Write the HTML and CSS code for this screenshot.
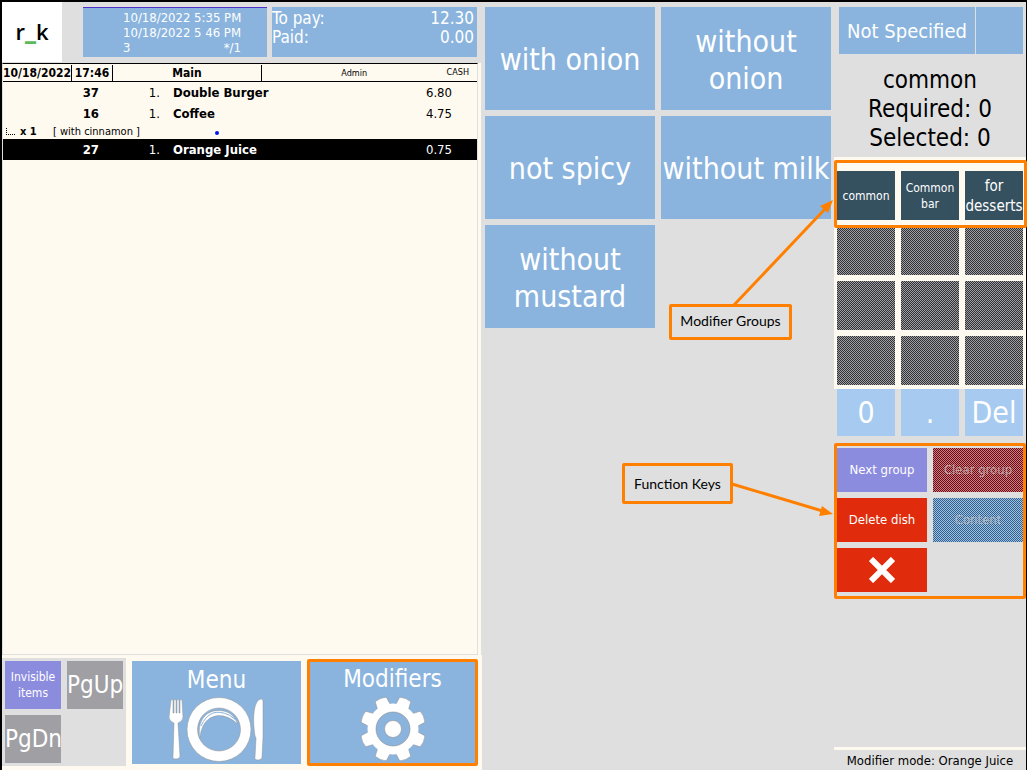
FILE: index.html
```html
<!DOCTYPE html>
<html lang="en">
<head>
	<meta charset="UTF-8">
	<title>Modifiers</title>
	<link rel="stylesheet" href="styles.css">
</head>
<body>
	<div class="station">
		<section class="order">
			<header class="head">
				<div class="logo">r<span>_</span>k</div>
				<div class="info">
					<p>10/18/2022 5:35 PM</p>
					<p>10/18/2022 5 46 PM</p>
					<p class="guests"><span>3</span><span>*/1</span></p>
				</div>
				<div class="total">
					<p><span>To pay:</span><span>12.30</span></p>
					<p><span>Paid:</span><span>0.00</span></p>
				</div>
			</header>
			<div class="bill">
				<div class="bill-head">
					<b class="date">10/18/2022</b>
					<b class="time">17:46</b>
					<b class="hall">Main</b>
					<span class="user">Admin</span>
					<span class="cash">CASH</span>
				</div>
				<table class="items">
					<tr>
						<td class="code">37</td>
						<td class="qty">1.</td>
						<td class="dish">Double Burger</td>
						<td class="price">6.80</td>
					</tr>
					<tr>
						<td class="code">16</td>
						<td class="qty">1.</td>
						<td class="dish">Coffee</td>
						<td class="price">4.75</td>
					</tr>
					<tr class="sub">
						<td colspan="4"><div class="mod"><i class="branch"></i><b>x 1</b><span>[ with cinnamon ]</span><i class="dot"></i></div></td>
					</tr>
					<tr class="current">
						<td class="code">27</td>
						<td class="qty">1.</td>
						<td class="dish">Orange Juice</td>
						<td class="price">0.75</td>
					</tr>
				</table>
			</div>
			<div class="tools">
				<div class="pager">
					<button class="violet small">Invisible items</button>
					<button class="grey">PgUp</button>
					<button class="grey">PgDn</button>
				</div>
				<button class="mode">
					<span>Menu</span>
					<svg width="96" height="66" viewBox="0 0 96 66">
						<g fill="#fff" stroke="#909090" stroke-width=".5">
							<path d="M2 3q1-1 2 0v13h1V3q1-1 2 0v13h1V3q1-1 2 0v13h1V3q1-1 2 0l1 17q0 4-5 6l2 33q0 3-4 3t-3-3l1-33q-5-2-5-6z"/>
							<path fill-rule="evenodd" d="M50 .5a32 32 0 1 1 0 64a32 32 0 1 1 0-64zM50 11a21.500 21.500 0 1 0 0 43a21.500 21.500 0 1 0 0-43z"/>
							<path d="M31 41C27 21 41 9 58 15q6 2 11 12Q54 14 41 21q-9 6-10 20z"/>
							<path d="M86 39C83 20 85 3 92 2q2 0 2 2v36l-1 20q0 3-4 3t-3-3l1-19z"/>
						</g>
						<path d="M32 29Q41 9 60 18l7 5" fill="none" stroke="#8ab4de"/>
					</svg>
				</button>
				<button class="mode active">
					<span>Modifiers</span>
					<svg width="66" height="66" viewBox="-33 -33 66 66">
						<g fill="#fff" stroke="#909090" stroke-width=".5">
							<g id="teeth">
								<path id="tooth" d="M-7-22L-6-32Q0-34 6-32L7-22z" transform="rotate(22.500)"/>
								<use href="#tooth" transform="rotate(45)"/>
								<use href="#tooth" transform="rotate(90)"/>
								<use href="#tooth" transform="rotate(135)"/>
							</g>
							<use href="#teeth" transform="rotate(180)"/>
						</g>
						<circle r="21" fill="none" stroke="#fff" stroke-width="9"/>
						<circle r="17" fill="#8ab4de" stroke="#909090" stroke-width=".6"/>
						<circle r="8.500" fill="#fff" stroke="#909090" stroke-width=".6"/>
					</svg>
				</button>
			</div>
		</section>

		<section class="modifiers">
			<button>with onion</button>
			<button>without onion</button>
			<button>not spicy</button>
			<button>without milk</button>
			<button>without mustard</button>
		</section>

		<aside class="side">
			<div class="seat">
				<button>Not Specified</button>
				<button aria-label="Seat"></button>
			</div>
			<div class="state">
				<p>common</p>
				<p>Required: 0</p>
				<p>Selected: 0</p>
			</div>
			<div class="groups">
				<button class="small">common</button>
				<button class="small">Common bar</button>
				<button class="wide">for desserts</button>
				<button disabled></button>
				<button disabled></button>
				<button disabled></button>
				<button disabled></button>
				<button disabled></button>
				<button disabled></button>
				<button disabled></button>
				<button disabled></button>
				<button disabled></button>
			</div>
			<div class="digits">
				<button>0</button>
				<button>.</button>
				<button>Del</button>
			</div>
			<div class="keys">
				<button class="violet">Next group</button>
				<button class="clear" disabled>Clear group</button>
				<button class="red">Delete dish</button>
				<button class="content" disabled>Content</button>
				<button class="red" aria-label="Close">
					<svg width="26" height="26" viewBox="0 0 26 26">
						<path d="M2 2l22 22M24 2L2 24" stroke="#fff" stroke-width="6"/>
					</svg>
				</button>
			</div>
			<footer class="status">Modifier mode: Orange Juice</footer>

			<!-- callouts -->
			<div class="frame"></div>
			<svg class="arrows" width="220" height="340" viewBox="0 0 220 340">
				<g fill="none" stroke="#ff8000" stroke-width="3">
					<path d="M120 125L211 29"/>
					<path d="M118 304L212 332"/>
				</g>
				<g fill="#ff8000">
					<path d="M219 20l-5 13-8-7z"/>
					<path d="M219 334l-14 2 3-10z"/>
				</g>
			</svg>
			<div class="note note-groups">Modifier Groups</div>
			<div class="note note-keys">Function Keys</div>
		</aside>
	</div>
</body>
</html>
```
FILE: styles.css
```css
*{
	box-sizing: border-box;
	margin: 0;
	padding: 0;
}
body{
	font: 13px/16px "DejaVu Sans Condensed", Tahoma, "DejaVu Sans", sans-serif;
	color: #000;
	background: #dfdfdf;
}
button{
	border: 0;
	font: inherit;
	color: #fff;
	background: #8ab4de;
	cursor: pointer;
}
.station{
	display: grid;
	grid-template-columns: 480fr 352fr 192fr;
	min-height: 100vh;
	border: solid #000;
	border-width: 2px 1px 0 2px;
}

/* order */
.order{
	display: flex;
	flex-direction: column;
	min-width: 0;
}
.head{
	display: grid;
	grid-template-columns: 81px minmax(0, 184fr) 5px minmax(0, 205fr);
	height: 61px;
	padding-right: 5px;
}
.logo{
	width: 60px;
	height: 60px;
	background: #fff;
	font: 600 22px/58px "Open Sans", "Noto Sans", sans-serif;
	text-align: center;
}
.logo span{
	color: #5cb85c;
	font-weight: 800;
}
.info, .total{
	height: 50px;
	margin-top: 5px;
	color: #fff;
	background: #8ab4de;
}
.info{
	padding: 2px 26px 0 40px;
	border-top: 1px solid #5030c8;
	line-height: 15px;
	white-space: nowrap;
}
.total{
	grid-column: 4;
	padding: 2px 3px 0 0;
	font-size: 17px;
	line-height: 19px;
}
.guests, .total p{
	display: flex;
	justify-content: space-between;
}
.bill{
	flex: 1;
	margin-right: 4px;
	border: 1px solid #dfdfdf;
	border-top: 1px solid #000;
	background: #fffaf0;
	box-shadow: 3px 0 #fffaf0;
}
.bill-head{
	display: flex;
	height: 18px;
	border-bottom: 1px solid #000;
	font-size: 12px;
	line-height: 17px;
	text-align: center;
}
.bill-head b{
	margin-top: 1px;
	border-right: 1px solid #000;
}
.date{
	width: 69px;
}
.time{
	width: 41px;
}
.hall{
	flex: 149;
}
.user{
	flex: 186;
	font-size: 9px;
	line-height: 19px;
}
.cash{
	padding-right: 8px;
	font-size: 9px;
}
.items{
	width: 100%;
	border-collapse: collapse;
	table-layout: fixed;
}
.items td{
	height: 21px;
}
.items .code{
	width: 96px;
	text-align: right;
	font-weight: bold;
}
.items .qty{
	width: 74px;
	padding-right: 13px;
	text-align: right;
}
.items .dish{
	font-weight: bold;
}
.items .price{
	width: 80px;
	padding-right: 25px;
	text-align: right;
}
.items .sub td{
	height: 15px;
	font-size: 11px;
	line-height: 15px;
}
.mod{
	display: flex;
	align-items: center;
	padding-left: 3px;
}
.branch{
	width: 9px;
	height: 7px;
	margin-right: 5px;
	border: dotted #000;
	border-width: 0 0 1px 1px;
}
.mod b{
	width: 33px;
}
.dot{
	width: 4px;
	height: 4px;
	margin: 3px 0 0 75px;
	border-radius: 50%;
	background: #0018e8;
}
.current{
	color: #fff;
	background: #000;
}

/* bottom buttons */
.tools{
	display: grid;
	grid-template-columns: auto 169fr 171fr;
	gap: 6px;
	padding: 3px 4px 4px 0;
	background: #fffaf0;
}
.pager{
	display: grid;
	grid-template-columns: 56px 56px;
	grid-template-rows: 48px 48px;
	gap: 6px;
	padding: 3px;
	background: #dfdfdf;
}
.violet{
	background: #8c8cdf;
}
.grey{
	background: #a09fa4;
	font-size: 24px;
}
.mode{
	display: flex;
	flex-direction: column;
	align-items: center;
	margin: 3px 0 2px;
	padding-top: 4px;
	font-size: 24px;
	line-height: 30px;
}
.mode svg{
	margin-top: 2px;
}
.mode.active{
	margin: 1px 0 0;
	padding-top: 2px;
	border: 3px solid #ff8000;
	border-radius: 2px;
}

/* modifiers */
.modifiers{
	display: grid;
	grid-template-columns: 1fr 1fr;
	grid-auto-rows: 103px;
	gap: 6px;
	padding: 5px 3px;
}
.modifiers button{
	padding-top: 2px;
	font-size: 30px;
	line-height: 37px;
}

/* right side */
.side{
	position: relative;
	display: flex;
	flex-direction: column;
}
.seat{
	display: grid;
	grid-template-columns: 136fr 47fr;
	gap: 1px;
	height: 52px;
	padding: 5px 3px 0 5px;
}
.seat button{
	font-size: 20px;
}
.state{
	padding: 12px 0 4px;
	font-size: 24px;
	line-height: 29px;
	text-align: center;
}
.groups, .digits{
	display: grid;
	grid-template-columns: repeat(3, minmax(0, 1fr));
	gap: 6px;
	padding: 14px 3px 4px;
	background: #fffaf0;
}
.groups{
	grid-auto-rows: 49px;
}
.groups button{
	background: #35505f;
}
.small{
	font-size: 12px;
}
.groups .wide{
	font-size: 15px;
	line-height: 20px;
}
.groups button:disabled{
	background: repeating-conic-gradient(#303038 0 25%, #a0a0a0 0 50%) 0 0/2px 2px;
}
.digits{
	grid-auto-rows: 47px;
	padding: 0 3px;
	background: none;
}
.digits button{
	background: #a6caf0;
	font-size: 30px;
}
.keys{
	display: grid;
	grid-template-columns: 1fr 1fr;
	grid-auto-rows: 44px;
	gap: 6px;
	margin-top: 7px;
	padding: 2px 0 4px;
	border: 3px solid #ff8000;
	border-radius: 2px;
}
.keys .red{
	background: #e02c0c;
}
.keys svg{
	display: block;
	margin: 0 auto;
}
.keys .clear{
	color: #c0a0a0;
	background: repeating-conic-gradient(#800010 0 25%, #b88888 0 50%) 0 0/2px 2px;
}
.keys .content{
	color: #b0b8c0;
	background: repeating-conic-gradient(#306090 0 25%, #a0c0e0 0 50%) 0 0/2px 2px;
}
.status{
	margin-top: auto;
	padding: 3px 0 1px;
	border-top: 3px solid #fffaf0;
	text-align: center;
}

/* callouts are placed from the left edge of the side column */
.frame{
	position: absolute;
	top: 158px;
	left: 0;
	right: -1px;
	height: 68px;
	border: 3px solid #ff8000;
	border-radius: 2px;
}
.arrows{
	position: absolute;
	top: 178px;
	left: -220px;
}
.note{
	position: absolute;
	border: 3px solid #ff8000;
	border-radius: 2px;
	background: #dfdfdf;
	font: 14px/28px Lato, "Open Sans", sans-serif;
	text-align: center;
	white-space: nowrap;
}
.note-groups{
	top: 302px;
	left: -165px;
	width: 123px;
	padding-bottom: 2px;
}
.note-keys{
	top: 461px;
	left: -212px;
	width: 111px;
	padding: 4px 0 3px;
}
```
